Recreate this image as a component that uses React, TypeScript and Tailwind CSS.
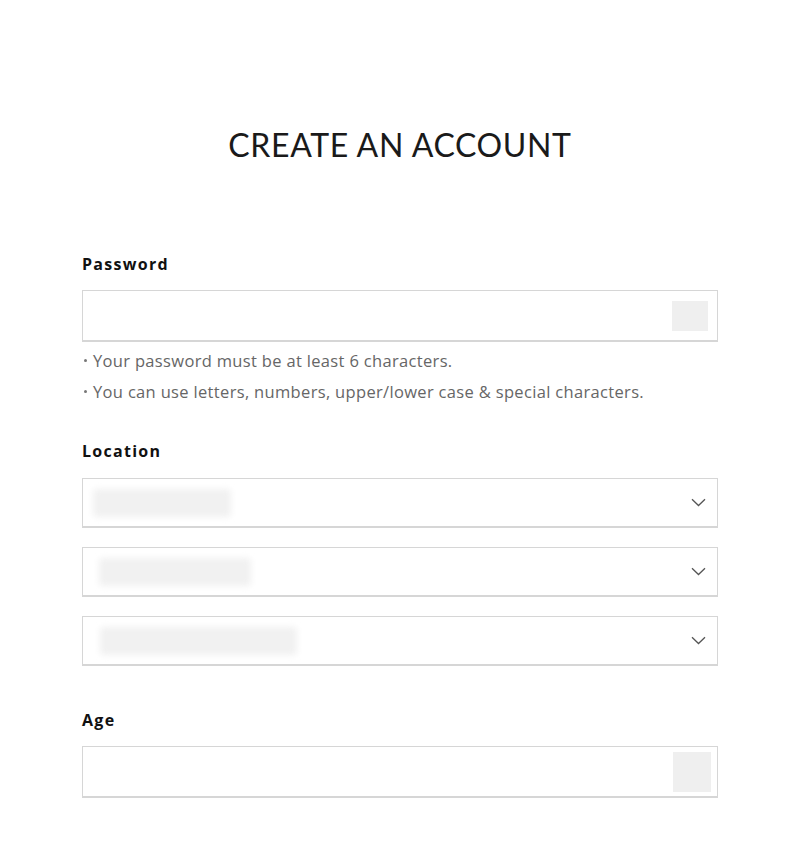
import React from 'react';

function Chevron() {
  return (
    <svg width="15" height="9" viewBox="0 0 15 9" fill="none" className="shrink-0">
      <path d="M1 1.2L7.5 7.5L14 1.2" stroke="#555" strokeWidth="1.3" />
    </svg>
  );
}

function Label({ children }: { children: React.ReactNode }) {
  return (
    <div className="font-['Open_Sans','Liberation_Sans',sans-serif] text-[16px] leading-[20px] font-bold tracking-[0.08em] text-[#111]">
      {children}
    </div>
  );
}

function SelectBox({ blurWidth, blurLeft }: { blurWidth: string; blurLeft: string }) {
  return (
    <div className="flex h-[50px] items-center justify-between border border-[#d6d6d6] border-b-2 bg-white pr-[11px]">
      <div className={`${blurLeft} ${blurWidth} h-[28px] rounded-sm bg-[#f1f1f1] blur-[3px]`} />
      <Chevron />
    </div>
  );
}

function Hint({ children }: { children: React.ReactNode }) {
  return (
    <div className="flex items-center">
      <span className="mr-[6px] ml-[2px] h-[3px] w-[3px] rounded-full bg-[#777]" />
      <span>{children}</span>
    </div>
  );
}

export default function App() {
  return (
    <div className="min-h-[862px] bg-white font-['Lato','Liberation_Sans',sans-serif] text-[#111]">
      <div className="mx-auto w-[636px] pt-[125px]">
        <h1 className="text-center text-[32px] leading-[40px] font-normal tracking-[0.02em] text-[#1a1a1a]">
          CREATE AN ACCOUNT
        </h1>

        {/* Password */}
        <div className="mt-[89px]">
          <Label>Password</Label>
          <div className="mt-[16px] flex h-[52px] items-center justify-end border border-[#d6d6d6] border-b-2 bg-white pr-[9px]">
            <div className="h-[30px] w-[36px] bg-[#efefef]" />
          </div>
          <div className="mt-[3px] font-['Open_Sans','Liberation_Sans',sans-serif] text-[16.5px] leading-[31px] tracking-[0.02em] text-[#666]">
            <Hint>Your password must be at least 6 characters.</Hint>
            <Hint>You can use letters, numbers, upper/lower case &amp; special characters.</Hint>
          </div>
        </div>

        {/* Location */}
        <div className="mt-[34px]">
          <Label>Location</Label>
          <div className="mt-[17px] flex flex-col gap-[19px]">
            <SelectBox blurLeft="ml-[10px]" blurWidth="w-[138px]" />
            <SelectBox blurLeft="ml-[16px]" blurWidth="w-[152px]" />
            <SelectBox blurLeft="ml-[17px]" blurWidth="w-[197px]" />
          </div>
        </div>

        {/* Age */}
        <div className="mt-[44px]">
          <Label>Age</Label>
          <div className="mt-[16px] flex h-[52px] items-center justify-end border border-[#d6d6d6] border-b-2 bg-white pr-[6px]">
            <div className="h-[40px] w-[38px] bg-[#efefef]" />
          </div>
        </div>
      </div>
    </div>
  );
}
